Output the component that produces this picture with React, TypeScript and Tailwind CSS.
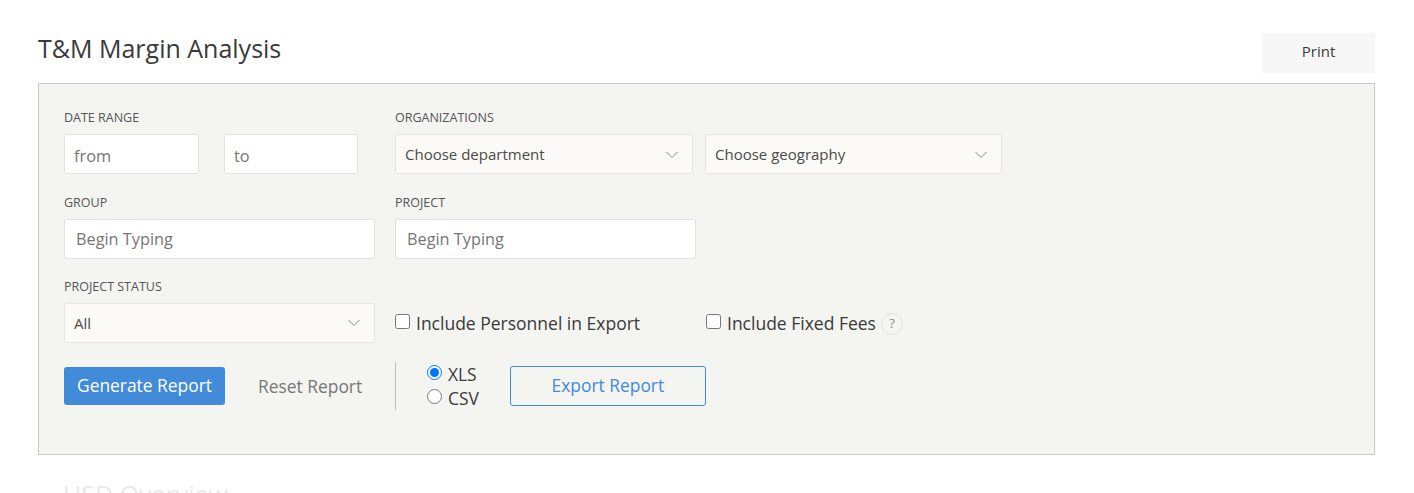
import React from "react";

function Chevron() {
  return (
    <svg width="14" height="8" viewBox="0 0 14 8" fill="none" className="shrink-0">
      <path d="M1.5 1l5.5 5.5L12.5 1" stroke="#8a8a8a" strokeWidth="1" />
    </svg>
  );
}

function Label({ children }: { children: React.ReactNode }) {
  return <div className="h-[17px] text-[12.5px] leading-[17px] text-[#555] uppercase">{children}</div>;
}

function Field({ placeholder, className }: { placeholder: string; className: string }) {
  return (
    <input
      readOnly
      placeholder={placeholder}
      className={`h-10 rounded-[2px] border border-[#e2e2e0] bg-white text-[16.3px] text-[#333] placeholder:text-[#757575] outline-none ${className}`}
    />
  );
}

function Select({ text, className }: { text: string; className: string }) {
  return (
    <div className={`flex h-10 items-center justify-between rounded-[2px] border border-[#e4e4e0] bg-[#fbfaf7] pr-[13px] pl-[9px] text-[15px] text-[#4a4a4a] ${className}`}>
      <span>{text}</span>
      <Chevron />
    </div>
  );
}

export default function App() {
  return (
    <div className="h-[493px] overflow-hidden bg-white pr-[39px] pl-[38px] font-['Open_Sans',sans-serif] text-[#333]">
      <div className="flex h-[83px] items-start justify-between">
        <h1 className="mt-[32px] text-[25px] leading-[33px] text-[#3a3a3a]">T&amp;M Margin Analysis</h1>
        <button className="mt-[33px] h-10 w-[113px] bg-[#f7f7f7] pb-[4px] text-[15px] text-[#3a3a3a]">Print</button>
      </div>

      <div className="h-[372px] border border-[#c8c8c6] bg-[#f4f4f1] pt-[25px] pl-[25px]">
        <div className="flex">
          <div className="w-[331px]">
            <Label>Date Range</Label>
            <div className="mt-2 flex gap-[25px]">
              <Field placeholder="from" className="w-[135px] px-[9px] pt-[4px]" />
              <Field placeholder="to" className="w-[134px] px-[9px] pt-[4px]" />
            </div>
          </div>
          <div>
            <Label>Organizations</Label>
            <div className="mt-2 flex gap-3">
              <Select text="Choose department" className="w-[298px] pt-[1px]" />
              <Select text="Choose geography" className="w-[297px] pt-[1px]" />
            </div>
          </div>
        </div>

        <div className="mt-5 flex">
          <div className="w-[331px]">
            <Label>Group</Label>
            <Field placeholder="Begin Typing" className="mt-2 w-[311px] px-[11px]" />
          </div>
          <div>
            <Label>Project</Label>
            <Field placeholder="Begin Typing" className="mt-2 w-[301px] px-[11px]" />
          </div>
        </div>

        <div className="mt-[19px] flex">
          <div className="w-[331px]">
            <Label>Project Status</Label>
            <Select text="All" className="mt-2 w-[311px]" />
          </div>
          <div className="flex items-start pt-[25px] text-[17.5px] text-[#3a3a3a]">
            <label className="flex w-[311px] items-start">
              <input type="checkbox" readOnly className="mt-[11px] mr-[6px] ml-0 h-[15px] w-[15px]" />
              <span className="mt-[8px] leading-[24px]">Include Personnel in Export</span>
            </label>
            <label className="flex items-start">
              <input type="checkbox" readOnly className="mt-[11px] mr-[6px] h-[15px] w-[15px]" />
              <span className="mt-[8px] leading-[24px]">Include Fixed Fees</span>
              <span className="mt-[10px] ml-[5px] flex h-[22px] w-[22px] items-center justify-center rounded-full border border-[#e2e2e0] text-[13px] text-[#888]">?</span>
            </label>
          </div>
        </div>

        <div className="mt-[19px] flex h-[48px] items-center">
          <button className="h-[38px] w-[161px] rounded-[3px] bg-[#418bd9] pb-[2px] text-[17.4px] text-white">Generate Report</button>
          <button className="ml-[33px] w-[105px] pt-[1px] text-left text-[17.4px] whitespace-nowrap text-[#777]">Reset Report</button>
          <div className="ml-[32px] h-[48px] w-px bg-[#bdbdbb]" />
          <div className="ml-[31px] flex flex-col text-[17.4px] leading-[24px] text-[#3a3a3a]">
            <label className="flex items-center">
              <input type="radio" name="fmt" defaultChecked className="mr-[6px] mb-[3px] ml-0 h-[15px] w-[15px]" />
              XLS
            </label>
            <label className="flex items-center">
              <input type="radio" name="fmt" className="mr-[6px] mb-[3px] ml-0 h-[15px] w-[15px]" />
              CSV
            </label>
          </div>
          <button className="ml-[31px] h-10 w-[196px] rounded-[3px] border border-[#418bd9] pb-[2px] text-[17.4px] text-[#418bd9]">Export Report</button>
        </div>
      </div>

      <div className="mt-[23px] ml-[25px] text-[25px] leading-[33px] text-[#333] opacity-10">USD Overview</div>
    </div>
  );
}
